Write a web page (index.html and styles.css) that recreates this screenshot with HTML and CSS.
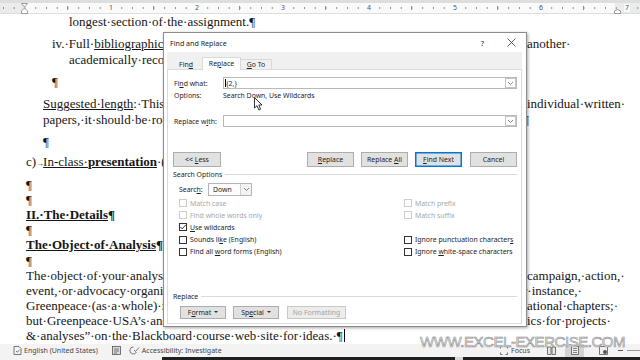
FILE: index.html
```html
<!DOCTYPE html>
<html>
<head>
<meta charset="utf-8">
<link rel="stylesheet" href="styles.css">
</head>
<body>
<div class="screen">
  <div class="ruler">
    <div class="ruler-bar">
      <span class="rspacer"></span>
      <span class="rnum"><i>1</i></span>
      <span class="rnum"><i>2</i></span>
      <span class="rnum"><i>3</i></span>
      <span class="rnum"><i>4</i></span>
      <span class="rnum"><i>5</i></span>
      <span class="rnum"><i>6</i></span>
      <span class="rnum"><i>7</i></span>
    </div>
    <svg class="mk-left" width="7" height="11" viewBox="0 0 7 11"><path d="M0.5,0.5 H6.5 L3.5,4 Z M3.5,5 L6.5,8 V10.5 H0.5 V8 Z" fill="#fff" stroke="#777" stroke-width="0.7"/></svg>
    <svg class="mk-right" width="7" height="5" viewBox="0 0 7 5"><path d="M0.5,4.5 V2 L3.5,0.5 L6.5,2 V4.5 Z" fill="#fff" stroke="#777" stroke-width="0.7"/></svg>
  </div>

  <div class="page">
    <div class="line"><span class="l i69">longest·section·of·the·assignment.¶</span></div>
    <div class="line m7"><span class="l i52">iv.·Full·<u>bibliographic</u>·references·to·sources·from·one·or·</span><span class="r">another·</span></div>
    <div class="line m1"><span class="l i69">academically·recognized·style·guide·</span></div>
    <div class="line m7"><span class="l i52">¶</span></div>
    <div class="line m7"><span class="l i43"><u>Suggested·length</u>:·This·should·be·comparable·to·</span><span class="r">individual·written·</span></div>
    <div class="line m1"><span class="l i43">papers,·it·should·be·rounded·out·</span><span class="r back">¶</span></div>
    <div class="line m7"><span class="l i43">¶</span></div>
    <div class="line m5"><span class="l i26">c)<span class="tabch">→</span><u>In-class·<b>presentation</b></u>·(</span></div>
    <div class="line m8"><span class="l i26">¶</span></div>
    <div class="line"><span class="l i26">¶</span></div>
    <div class="line"><span class="l i26"><b><u>II.·The·Details</u>¶</b></span></div>
    <div class="line"><span class="l i26">¶</span></div>
    <div class="line"><span class="l i26"><b><u>The·Object·of·Analysis</u>¶</b></span></div>
    <div class="line m1"><span class="l i26">¶</span></div>
    <div class="line"><span class="l i26">The·object·of·your·analysis·can·be·a·</span><span class="r">campaign,·action,·</span></div>
    <div class="line"><span class="l i26">event,·or·advocacy·organization·</span><span class="r back">r·instance,·</span></div>
    <div class="line"><span class="l i26">Greenpeace·(as·a·whole)·is·too·broad·</span><span class="r">ational·chapters;·</span></div>
    <div class="line"><span class="l i26">but·Greenpeace·USA’s·and·</span><span class="r">ics·for·projects·</span></div>
    <div class="line"><span class="l i26">&amp;·analyses”·on·the·Blackboard·course·web·site·for·ideas.·¶<span class="caret"></span></span></div>
  </div>

  <div class="status">
    <svg class="st-ico doc" width="9" height="9" viewBox="0 0 9 9"><path d="M1,0.5 H6 L8,2.5 V8.5 H1 Z" fill="none" stroke="#555" stroke-width="0.8"/><path d="M3,5 L4.3,6.3 L6.5,3.8" fill="none" stroke="#555" stroke-width="0.8"/></svg>
    <span class="st-text lang">English (United States)</span>
    <svg class="st-ico macro" width="9" height="9" viewBox="0 0 9 9"><rect x="0.5" y="0.5" width="8" height="8" fill="#ddd" stroke="#555" stroke-width="0.8"/><path d="M2,3 H7 M2,5 H7 M2,7 H5" stroke="#555" stroke-width="0.8"/></svg>
    <svg class="st-ico acc" width="11" height="9" viewBox="0 0 11 9"><path d="M4.5,1 A3.5,3.5 0 1 0 7.5,6" fill="none" stroke="#555" stroke-width="0.8"/><path d="M5,4 L6.5,5.5 L10,1.5" fill="none" stroke="#555" stroke-width="0.8"/></svg>
    <span class="st-text">Accessibility: Investigate</span>
    <span class="st-fill"></span>
    <svg class="st-ico focus" width="8" height="9" viewBox="0 0 8 9"><path d="M0.5,2.5 V0.5 H2.5 M5.5,0.5 H7.5 V2.5 M7.5,6.5 V8.5 H5.5 M2.5,8.5 H0.5 V6.5" fill="none" stroke="#555" stroke-width="0.8"/></svg>
    <span class="st-text">Focus</span>
    <svg class="st-ico view1" width="9" height="9" viewBox="0 0 9 9"><path d="M0.5,1 H4 V8.5 H0.5 Z M5,1 H8.5 V8.5 H5 Z" fill="#e5e5e5" stroke="#555" stroke-width="0.8"/></svg>
    <span class="st-sel"><svg width="8" height="9" viewBox="0 0 8 9"><path d="M0.5,0.5 H7.5 V8.5 H0.5 Z" fill="#eee" stroke="#555" stroke-width="0.8"/><path d="M2,2.5 H6 M2,4.5 H6 M2,6.5 H6" stroke="#555" stroke-width="0.7"/></svg></span>
    <svg class="st-ico view3" width="9" height="9" viewBox="0 0 9 9"><path d="M0.5,0.5 H8.5 V8.5 H0.5 Z" fill="#eee" stroke="#555" stroke-width="0.8"/><circle cx="6" cy="6" r="2" fill="#555"/></svg>
    <span class="st-minus"></span>
    <span class="st-slider"></span>
  </div>
  <div class="taskbar"><span class="tb-light"></span><span class="tb-dark a"></span><span class="tb-gap"></span><span class="tb-dark b"></span></div>

  <div class="dialog">
    <div class="titlebar">
      <span class="title">Find and Replace</span>
      <span class="help">?</span>
      <svg class="close" width="9" height="9" viewBox="0 0 9 9"><path d="M0.5,0.5 L8.5,8.5 M8.5,0.5 L0.5,8.5" stroke="#333" stroke-width="0.8"/></svg>
    </div>
    <div class="dbody">
      <div class="tabs">
        <div class="tab plain"><span>Fin<u>d</u></span></div>
        <div class="tab active"><span>Re<u>p</u>lace</span></div>
        <div class="tab boxed"><span><u>G</u>o To</span></div>
      </div>
      <div class="panel">
        <div class="frow findrow">
          <span class="lbl">Fi<u>n</u>d what:</span>
          <div class="combo"><span class="tcaret"></span><span class="ctext">{2,}</span><span class="drop"><svg width="7" height="5" viewBox="0 0 7 5"><path d="M1,1 L3.5,3.5 L6,1" fill="none" stroke="#666" stroke-width="0.8"/></svg></span></div>
        </div>
        <div class="frow optrow">
          <span class="lbl">Options:</span>
          <span>Search Down, Use Wildcards</span>
        </div>
        <div class="frow replrow">
          <span class="lbl">Replace w<u>i</u>th:</span>
          <div class="combo"><span class="ctext"></span><span class="drop"><svg width="7" height="5" viewBox="0 0 7 5"><path d="M1,1 L3.5,3.5 L6,1" fill="none" stroke="#666" stroke-width="0.8"/></svg></span></div>
        </div>
        <div class="btnrow">
          <div class="btn less"><span>&lt;&lt; <u>L</u>ess</span></div>
          <span class="grow"></span>
          <div class="btn"><span><u>R</u>eplace</span></div>
          <div class="btn"><span>Replace <u>A</u>ll</span></div>
          <div class="btn focus"><span><u>F</u>ind Next</span></div>
          <div class="btn"><span>Cancel</span></div>
        </div>
        <div class="section so">Search Options</div>
        <div class="searchrow">
          <span class="slbl">Searc<u>h</u>:</span>
          <div class="select"><span class="stext">Down</span><span class="sdrop"><svg width="7" height="5" viewBox="0 0 7 5"><path d="M1,1 L3.5,3.5 L6,1" fill="none" stroke="#666" stroke-width="0.8"/></svg></span></div>
        </div>
        <div class="checks">
          <div class="chk dis"><span class="box"></span><span>Match case</span></div>
          <div class="chk dis"><span class="box"></span><span>Match prefix</span></div>
          <div class="chk dis"><span class="box"></span><span>Find whole words only</span></div>
          <div class="chk dis"><span class="box"></span><span>Match suffix</span></div>
          <div class="chk"><span class="box"><svg width="8" height="8" viewBox="0 0 8 8"><path d="M1.3,4 L3.2,5.9 L6.8,1.8" fill="none" stroke="#222" stroke-width="0.9"/></svg></span><span><u>U</u>se wildcards</span></div>
          <div class="chk"></div>
          <div class="chk"><span class="box"></span><span>Sounds li<u>k</u>e (English)</span></div>
          <div class="chk"><span class="box"></span><span>Ignore punctuation character<u>s</u></span></div>
          <div class="chk"><span class="box"></span><span>Find all <u>w</u>ord forms (English)</span></div>
          <div class="chk"><span class="box"></span><span>Ignore <u>w</u>hite-space characters</span></div>
        </div>
        <div class="section rp">Replace</div>
        <div class="btnrow2">
          <div class="btn2 fmt"><span>F<u>o</u>rmat</span><span class="tri"></span></div>
          <div class="btn2 spc"><span>Sp<u>e</u>cial</span><span class="tri"></span></div>
          <div class="btn2 nof"><span>No Formatting</span></div>
        </div>
      </div>
    </div>
  </div>

  <div class="watermark">WWW.EXCEL-EXERCISE.COM</div>
  <svg class="pointer" width="9" height="14" viewBox="0 0 9 14"><path d="M0.5,0.5 L0.5,11 L3,8.7 L4.9,13 L6.6,12.2 L4.8,8 L8,8 Z" fill="#fff" stroke="#000" stroke-width="0.8"/></svg>
</div>
</body>
</html>
```

FILE: styles.css
```css
* { box-sizing: border-box; }
html, body { margin: 0; padding: 0; }
body {
  width: 640px;
  height: 360px;
  overflow: hidden;
  background: #fff;
  font-family: "Liberation Serif", "Times New Roman", serif;
}
.screen {
  position: relative;
  width: 640px;
  height: 360px;
  display: flex;
  flex-direction: column;
  overflow: hidden;
}

/* ruler */
.ruler {
  position: relative;
  flex: none;
  height: 14px;
  background: #dedede;
  padding-top: 3px;
}
.ruler-bar {
  height: 10px;
  display: flex;
  overflow: hidden;
  background-image:
    radial-gradient(circle, #8c8c8c 0.55px, transparent 0.95px),
    linear-gradient(to right, transparent 42.5px, #8c8c8c 42.5px, #8c8c8c 43.5px, transparent 43.5px),
    linear-gradient(to right, #ebebeb 25px, #fafafa 25px, #fafafa 615px, #ebebeb 615px);
  background-size: 10.75px 10px, 86px 4px, 640px 10px;
  background-position: 19.6px 0, 25px 3px, 0 0;
  background-repeat: repeat-x, repeat-x, no-repeat;
}
.rspacer { flex: none; width: 68px; }
.rnum {
  flex: none;
  width: 86px;
  display: flex;
  justify-content: center;
  align-items: center;
  font-family: "Noto Sans", sans-serif;
  font-size: 7px;
  color: #555;
}
.rnum i { font-style: normal; background: #fafafa; padding: 0 1px; line-height: 8px; }
.mk-left { position: absolute; left: 21px; top: 3px; }
.mk-right { position: absolute; left: 614px; top: 9px; }

/* document */
.page {
  flex: none;
  height: 330px;
  font-size: 13px;
  line-height: 15px;
  color: #151515;
  overflow: hidden;
}
.line {
  display: grid;
  grid-template-columns: 527px auto;
  height: 15px;
  white-space: nowrap;
}
.l { overflow: hidden; }
.r { overflow: hidden; }
.back { margin-left: -4px; }
.i26 { padding-left: 26px; }
.i43 { padding-left: 43px; }
.i52 { padding-left: 52px; }
.i69 { padding-left: 69px; }
.m1 { margin-top: 1px; }
.m5 { margin-top: 5px; }
.m7 { margin-top: 7px; }
.m8 { margin-top: 8px; }
.tabch { display: inline-block; width: 7px; font-size: 8px; }
.page u { text-decoration-thickness: 1px; text-underline-offset: 1px; }
.caret {
  display: inline-block;
  width: 1px;
  height: 13px;
  background: #000;
  vertical-align: -2px;
  margin-left: 1px;
}

/* status bar */
.status {
  flex: none;
  height: 13px;
  background: #f3f3f3;
  display: flex;
  align-items: center;
  font-family: "Noto Sans", sans-serif;
  font-size: 7px;
  color: #444;
  white-space: nowrap;
}
.st-ico { flex: none; }
.doc { margin-left: 13px; }
.lang { margin-left: 13px; }
.macro { margin-left: 14px; }
.acc { margin-left: 8px; }
.st-text { margin-left: 2px; }
.st-fill { flex: 1; }
.focus { margin-right: 1px; }
.view1 { margin-left: 17px; }
.st-sel {
  margin-left: 9px;
  width: 19px;
  height: 13px;
  background: #d4d4d4;
  display: flex;
  align-items: center;
  justify-content: center;
}
.view3 { margin-left: 15px; }
.st-minus { margin-left: 10px; width: 5px; height: 1px; background: #555; }
.st-slider { margin-left: 4px; width: 13px; height: 1px; background: #999; }

.taskbar { flex: none; height: 3px; display: flex; }
.tb-light { width: 162px; background: #f3f3f3; }
.tb-dark { background: #1f1f1f; }
.tb-dark.a { width: 293px; }
.tb-gap { width: 8px; background: #d8d8d8; }
.tb-dark.b { flex: 1; }

/* dialog */
.dialog {
  position: absolute;
  left: 163px;
  top: 32px;
  width: 364px;
  height: 295px;
  background: #fff;
  border: 1px solid #8c8c8c;
  box-shadow: 1px 1px 3px rgba(0,0,0,0.35);
  font-family: "Noto Sans", sans-serif;
  font-size: 6.9px;
  color: #1e1e1e;
  overflow: hidden;
}
.dialog u { text-underline-offset: 1px; text-decoration-thickness: 0.6px; }
.titlebar {
  height: 19px;
  display: flex;
  align-items: center;
  padding-left: 6px;
}
.title { flex: 1; font-size: 7.1px; }
.help { width: 9px; font-size: 7.5px; text-align: center; margin-right: 20px; }
.close { margin-right: 10px; }
.dbody { padding: 0 4px 0 3px; }
.tabs {
  height: 17px;
  background: #f0f0f0;
  display: flex;
  align-items: flex-end;
  padding-left: 3px;
}
.tab {
  display: flex;
  align-items: center;
  justify-content: center;
  white-space: nowrap;
}
.tab.plain { width: 32px; height: 10px; }
.tab.active {
  width: 39px;
  height: 13px;
  background: #fff;
  border: 1px solid #d9d9d9;
  border-bottom: none;
  margin-bottom: -1px;
  position: relative;
  padding-bottom: 1px;
}
.tab.boxed {
  width: 31px;
  height: 10px;
  border: 1px solid #d9d9d9;
  border-left: none;
  border-bottom: none;
}
.panel {
  border: 1px solid #dcdcdc;
  padding: 7px 4px 4px 0;
  background: #fff;
}
.frow { display: flex; align-items: center; padding-left: 6px; white-space: nowrap; }
.lbl { width: 49px; flex: none; }
.findrow { height: 12px; }
.optrow { height: 10px; margin-top: 1px; }
.replrow { height: 12px; margin-top: 15px; }
.combo {
  flex: 1;
  height: 12px;
  border: 1px solid #b9b9b9;
  display: flex;
  align-items: center;
  padding-left: 1px;
}
.tcaret { width: 1px; height: 8px; background: #000; }
.ctext { flex: 1; }
.drop {
  width: 11px;
  height: 10px;
  border: 1px solid #c6c6c6;
  display: flex;
  align-items: center;
  justify-content: center;
}
.btnrow {
  display: flex;
  height: 15px;
  margin-top: 25px;
  padding-left: 5px;
  gap: 7px;
}
.grow { flex: 1; }
.btn {
  width: 47px;
  height: 15px;
  background: #e1e1e1;
  border: 1px solid #adadad;
  display: flex;
  align-items: center;
  justify-content: center;
  white-space: nowrap;
}
.btn.less { width: 48px; }
.btn.focus { border-color: #0078d7; box-shadow: inset 0 0 0 0.5px #0078d7; }
.section {
  display: flex;
  align-items: center;
  height: 10px;
  padding-left: 5px;
  gap: 3px;
  white-space: nowrap;
}
.section::after { content: ""; flex: 1; height: 1px; background: #dadada; }
.so { margin-top: 2px; }
.rp { margin-top: 34px; }
.searchrow {
  display: flex;
  align-items: center;
  height: 13px;
  margin-top: 4px;
  padding-left: 11px;
}
.slbl { width: 29px; }
.select {
  width: 44px;
  height: 13px;
  border: 1px solid #b5b5b5;
  background: #fdfdfd;
  display: flex;
  align-items: center;
}
.stext { flex: 1; padding-left: 4px; }
.sdrop {
  width: 11px;
  height: 11px;
  border-left: 1px solid #cfcfcf;
  background: #f2f2f2;
  display: flex;
  align-items: center;
  justify-content: center;
}
.checks {
  display: grid;
  grid-template-columns: 225px 1fr;
  grid-auto-rows: 12.2px;
  margin-top: 1px;
  padding-left: 11px;
}
.chk { display: flex; align-items: center; gap: 3px; white-space: nowrap; }
.box {
  flex: none;
  width: 8px;
  height: 8px;
  border: 1px solid #333;
  background: #fff;
  display: flex;
  align-items: center;
  justify-content: center;
}
.box svg { margin: -1px; }
.chk.dis { color: #a8a8a8; }
.chk.dis .box { border-color: #cdcdcd; }
.btnrow2 {
  display: flex;
  margin-top: 4px;
  padding-left: 12px;
  height: 13px;
}
.btn2 {
  height: 13px;
  background: #e1e1e1;
  border: 1px solid #adadad;
  display: flex;
  align-items: center;
  justify-content: center;
  white-space: nowrap;
}
.fmt { width: 46px; }
.spc { width: 46px; margin-left: 7px; }
.nof { width: 59px; margin-left: 8px; color: #a3a3a3; border-color: #c8c8c8; background: #ececec; }
.tri {
  width: 0;
  height: 0;
  border-left: 2px solid transparent;
  border-right: 2px solid transparent;
  border-top: 2px solid #333;
  margin-left: 3px;
}

/* overlays */
.watermark {
  position: absolute;
  left: 420px;
  top: 333px;
  font-family: "Liberation Sans", Arial, sans-serif;
  font-size: 15px;
  letter-spacing: -0.45px;
  color: #eeeeee;
  -webkit-text-stroke: 0.6px #8e8e8e;
  white-space: nowrap;
}
.pointer { position: absolute; left: 254px; top: 97px; }
```
